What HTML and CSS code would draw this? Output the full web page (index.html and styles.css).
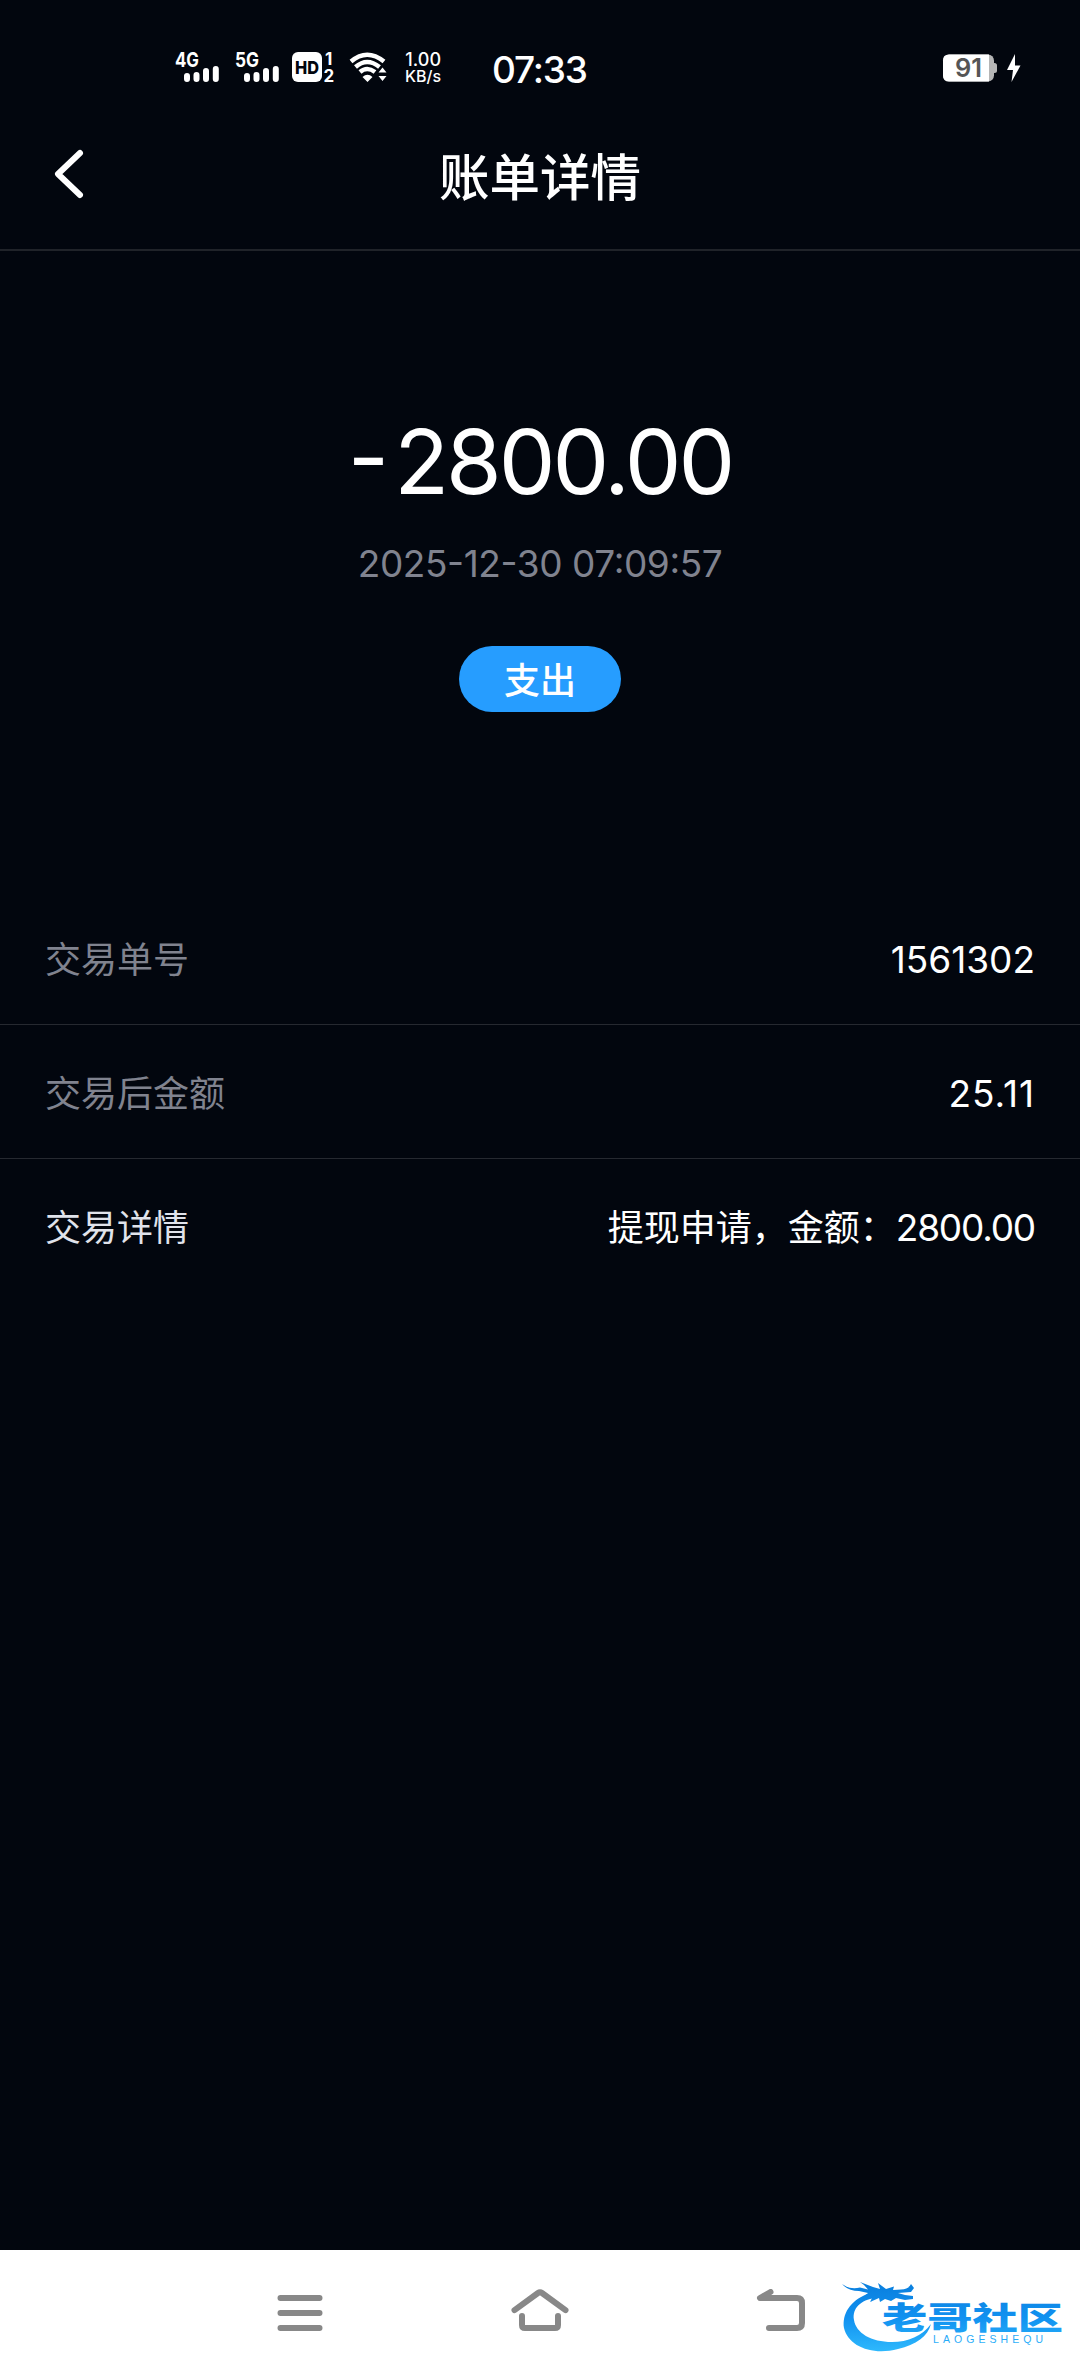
FILE: index.html
```html
<!DOCTYPE html>
<html lang="zh-CN">
<head>
<meta charset="utf-8">
<title>账单详情</title>
<link rel="stylesheet" href="styles.css">
</head>
<body>
<div class="screen">
  <div class="status">
    <svg class="signal" width="46" height="36" viewBox="0 0 46 36">
      <text x="0" y="17" textLength="24" lengthAdjust="spacingAndGlyphs">4G</text>
      <path d="M12 26v3M21.500 25v4M31 21v8M40.800 19v10"/>
    </svg>
    <svg class="signal" width="46" height="36" viewBox="0 0 46 36">
      <text x="0" y="17" textLength="24" lengthAdjust="spacingAndGlyphs">5G</text>
      <path d="M12 26v3M21.500 25v4M31 21v8M40.800 19v10"/>
    </svg>
    <svg class="hd" width="44" height="36" viewBox="0 0 44 36">
      <rect x="0" y="2" width="30" height="30" rx="6"/>
      <text class="hd-label" x="3" y="23.500" textLength="24" lengthAdjust="spacingAndGlyphs">HD</text>
      <text x="33" y="14.500">1</text>
      <text x="31.500" y="31.500">2</text>
    </svg>
    <svg class="wifi" width="38" height="36" viewBox="0 0 38 36">
      <path d="M2 11.500Q18 -2 35 11.500M6.500 17Q18 7 30.500 17M11 22Q18 16 26 22"/>
      <path class="solid" d="M13.500 27Q18.500 22.500 23.500 27L18.500 32ZM29.500 22.500L33.500 17.500L37.500 22.500ZM29.500 26L33.500 31L37.500 26Z"/>
    </svg>
    <div class="speed"><span>1.00</span><span>KB/s</span></div>
    <div class="clock">07:33</div>
    <div class="power">
      <svg width="54" height="28" viewBox="0 0 54 28">
        <rect x="0" y="0.500" width="51" height="27" rx="6" fill="#b5b5b5"/>
        <path d="M50 9h1.500q2.500 0 2.500 2.500v5q0 2.500-2.500 2.500H50z" fill="#b5b5b5"/>
        <path d="M6 .5H46V27.500H6Q0 27.500 0 21.500V6.500Q0 .5 6 .5z" fill="#fff"/>
        <text x="12" y="23" textLength="27" lengthAdjust="spacingAndGlyphs">91</text>
      </svg>
      <svg width="16" height="28" viewBox="0 0 16 28"><path d="M9 0L1 16H7L5.500 28L14.500 11.500H9Z" fill="#fff"/></svg>
    </div>
  </div>

  <header class="header">
    <svg class="back" width="36" height="56" viewBox="0 0 36 56"><path d="M29 7L7 28L29 49"/></svg>
    <h1>账单详情</h1>
  </header>

  <main>
    <section class="summary">
      <div class="amount"><span class="sign">-</span>2800.00</div>
      <div class="time">2025-12-30 07:09:57</div>
      <div class="tag">支出</div>
    </section>
    <section class="rows">
      <div class="row"><span class="label">交易单号</span><span class="value num">1561302</span></div>
      <div class="row"><span class="label">交易后金额</span><span class="value num loose">25.11</span></div>
      <div class="row"><span class="label bright">交易详情</span><span class="value">提现申请，金额：<span class="num tight">2800.00</span></span></div>
    </section>
  </main>

  <nav class="nav">
    <svg width="64" height="48" viewBox="0 0 64 48"><path d="M12.500 9H51.500M12.500 24H51.500M12.500 39H51.500"/></svg>
    <svg width="64" height="48" viewBox="0 0 64 48"><path d="M6.500 21.200L30 4Q32 2.500 34 4L57.500 21.200M14 27V36Q14 39 17 39H47Q50 39 50 36V27"/></svg>
    <svg width="64" height="48" viewBox="0 0 64 48"><path d="M22.500 3L12 9H49Q54 9 54 14V34Q54 39 49 39H21"/></svg>
    <svg class="watermark" width="226" height="86" viewBox="0 0 226 86">
      <defs><linearGradient id="blue" x1="0" y1="5" x2="0" y2="70" gradientUnits="userSpaceOnUse"><stop offset="0" stop-color="#0a80df"/><stop offset=".5" stop-color="#1191f0"/><stop offset="1" stop-color="#2db7fc"/></linearGradient></defs>
      <g fill="url(#blue)">
        <path d="M27 14C10 21 2 34 4 48C8 66 32 76 58 69C76 65 88 56 91 44C82 56 68 62 52 62C31 62 16 53 14 40C12 28 21 20 35 18L39 14Z"/>
        <path d="M2 4Q10 10 20 7.500L28 9.500L24 5L20 2L33 7L40 9L38 3L46 9L54 6.500L53 10L61 9.500Q69 9 71 4L74 8L71 12L58 13L65 15L73 16L73 19L65 20L56 18L51 21L45 19L40 22L39 18L30 22L33 16L21 19L28 13L19 11Q8 11 2 4Z"/>
        <text class="brand" x="42" y="48.500" textLength="181" lengthAdjust="spacingAndGlyphs">老哥社区</text>
        <text class="latin" x="93" y="62.500" textLength="110">LAOGESHEQU</text>
      </g>
    </svg>
  </nav>
</div>
</body>
</html>
```
FILE: styles.css
```css
* { box-sizing: border-box; }
body { margin: 0; background: #02060e; color: #fff; font-family: Inter, "Noto Sans CJK SC", sans-serif; }
.screen { width: 1080px; height: 2376px; display: flex; flex-direction: column; background: #02060e; }

.status { height: 118px; padding: 50px 58px 0 175px; display: flex; align-items: flex-start; flex: none; }
.status svg { display: block; flex: none; overflow: visible; }
.signal { margin-right: 14px; }
.signal text { font-size: 20px; font-weight: 700; fill: #fff; }
.signal path { stroke: #fff; stroke-width: 6px; stroke-linecap: round; fill: none; }
.hd { margin-left: -3px; fill: #fff; }
.hd text { font-size: 17px; font-weight: 700; }
.hd .hd-label { font-size: 18px; font-weight: 800; fill: #02060e; }
.wifi { margin-left: 13px; fill: none; stroke: #fff; stroke-width: 4.5px; }
.wifi .solid { fill: #fff; stroke: none; }
.speed { width: 37px; margin-left: 17px; padding-top: 1px; display: flex; flex-direction: column; align-items: flex-end; font-size: 18px; line-height: 17px; font-weight: 500; white-space: nowrap; }
.speed span:last-child { font-size: 16px; }
.clock { margin-left: 51px; padding-top: 1px; font-size: 37px; line-height: 38px; font-weight: 500; letter-spacing: -1.2px; }
.power { display: flex; gap: 9px; margin-left: auto; padding-top: 4px; }
.power text { font-size: 25px; font-weight: 600; fill: #555; }

.header { height: 133px; flex: none; border-bottom: 2px solid #202329; display: grid; grid-template-columns: 120px 1fr 120px; }
.back { margin: 28px 0 0 51px; fill: none; stroke: #fff; stroke-width: 6px; stroke-linecap: round; stroke-linejoin: round; }
h1 { margin: 0; padding-top: 23px; text-align: center; font-size: 50.5px; line-height: 74px; font-weight: 500; }

.summary { height: 640px; padding-top: 156px; display: flex; flex-direction: column; align-items: center; }
.amount { font-size: 90px; line-height: 110px; letter-spacing: -3px; font-feature-settings: "case"; }
.sign { margin-right: 8px; }
.time { margin-top: 23px; font-size: 37px; line-height: 48px; color: #80838f; letter-spacing: -0.4px; font-feature-settings: "case"; }
.tag { margin-top: 58px; width: 162px; height: 66px; padding-top: 2px; border-radius: 33px; background: #269dff; font-size: 36px; line-height: 66px; text-align: center; font-weight: 500; }

.row { height: 134px; padding: 4px 45px 0; display: flex; align-items: center; justify-content: space-between; border-bottom: 1px solid #262930; font-size: 36px; line-height: 52px; }
.row:last-child { border-bottom: 0; }
.label { color: #80838f; }
.label.bright { color: #e0e3eb; }
.num { font-size: 37px; }
.loose { letter-spacing: 1px; }
.tight { letter-spacing: -1.2px; }

.nav { height: 126px; margin-top: auto; flex: none; background: #fff; position: relative; display: flex; gap: 176px; padding: 39px 0 0 268px; }
.nav > svg { flex: none; fill: none; stroke: #888; stroke-width: 6px; stroke-linecap: round; stroke-linejoin: round; }
.nav > .watermark { position: absolute; left: 840px; top: 30px; stroke: none; }
.brand { font-family: "Noto Sans CJK SC", sans-serif; font-size: 31px; font-weight: 900; }
.latin { font-family: "Liberation Sans", sans-serif; font-size: 10.5px; }
```
